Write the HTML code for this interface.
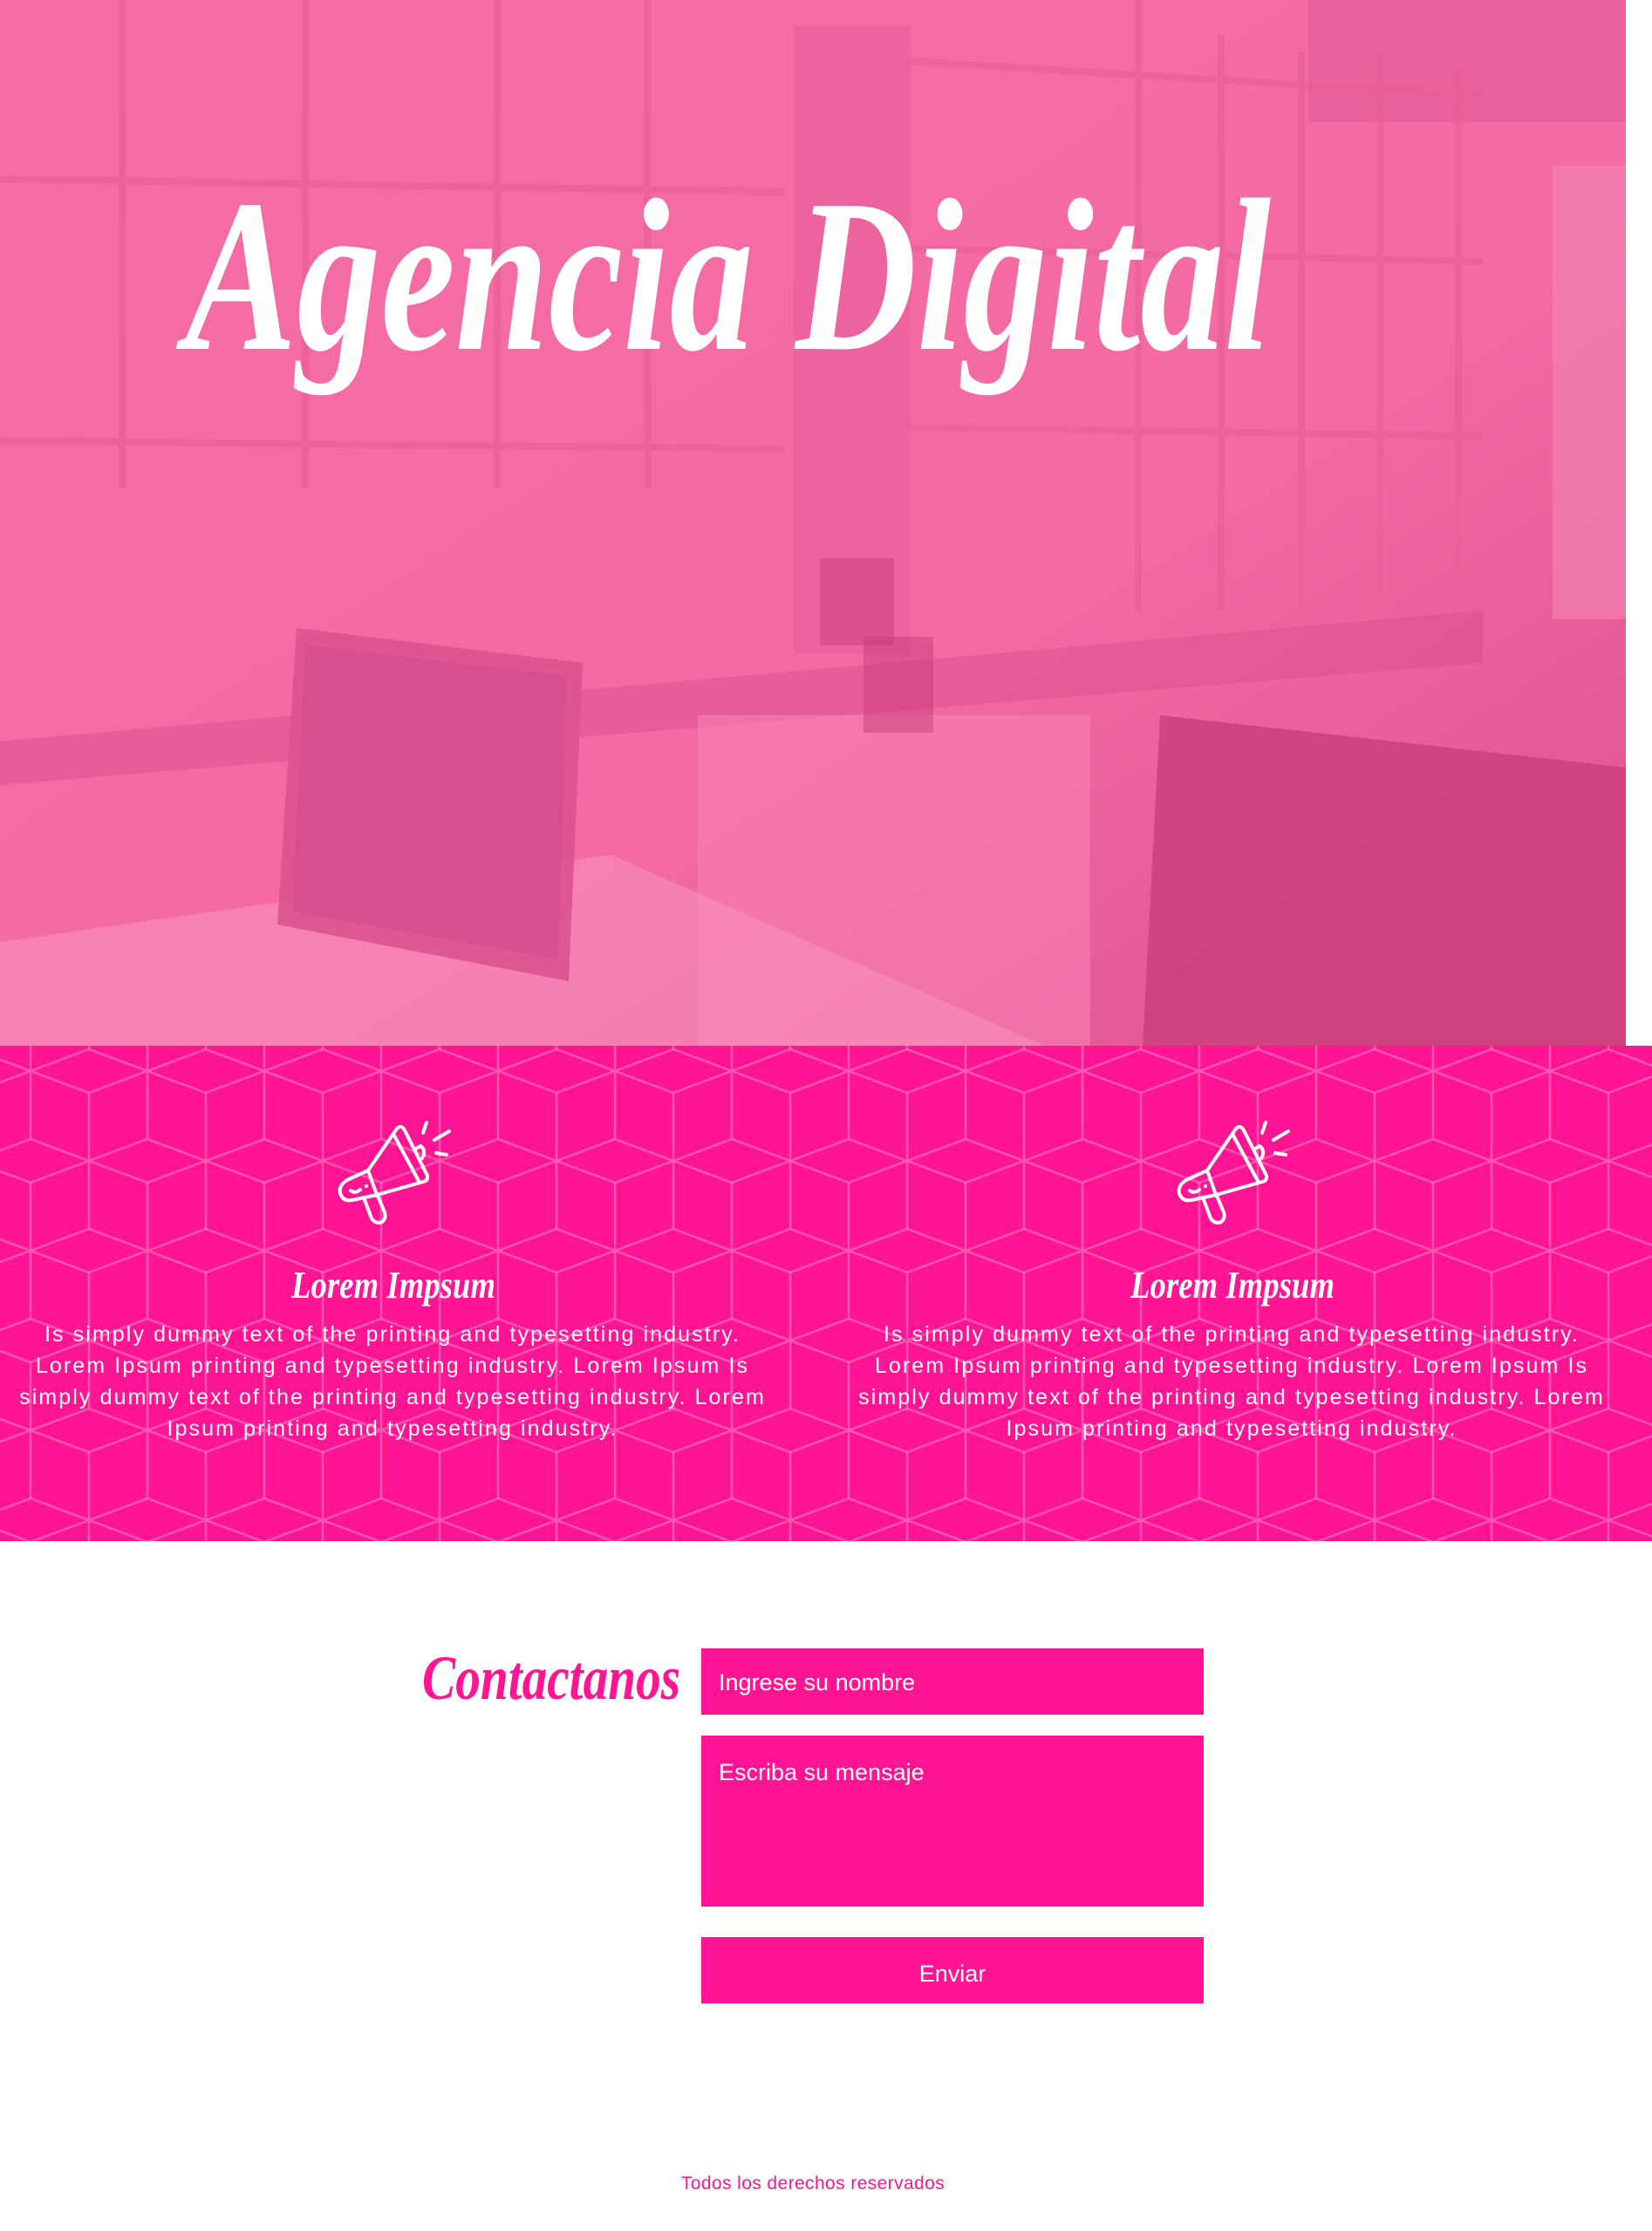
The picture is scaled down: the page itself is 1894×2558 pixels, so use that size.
<!DOCTYPE html>
<html><head><meta charset="utf-8">
<style>
*{margin:0;padding:0;box-sizing:border-box}
body{width:1894px;height:2558px;background:#fff;position:relative;overflow:hidden;font-family:"Liberation Sans",sans-serif}
.abs{position:absolute}
.feat{left:0;top:1199px;width:1894px;height:568px;background:#ff1493}
.p{position:absolute;width:960px;text-align:center;color:#fff;font-size:25px;letter-spacing:2.1px;line-height:36px;top:1512px}
.box{position:absolute;left:804px;width:576px;background:#ff1493;color:#fff;font-size:27px}
</style></head><body>

<svg class="abs" style="left:0;top:0" width="1864" height="1200" viewBox="0 0 1864 1200">
<defs>
<linearGradient id="g1" x1="0" y1="0" x2="1" y2="1">
<stop offset="0" stop-color="#f66ba4"/><stop offset="0.6" stop-color="#f46ba4"/><stop offset="1" stop-color="#dc4f8b"/>
</linearGradient>
</defs>
<rect width="1864" height="1200" fill="url(#g1)"/>
<rect x="1500" y="0" width="364" height="140" fill="#e05a92" opacity="0.5"/>
<g stroke="#e85d96" stroke-width="8" opacity="0.6" fill="none">
<line x1="140" y1="0" x2="140" y2="560"/><line x1="350" y1="0" x2="350" y2="560"/>
<line x1="570" y1="0" x2="570" y2="560"/><line x1="742" y1="0" x2="742" y2="560"/>
<line x1="1305" y1="0" x2="1305" y2="700"/><line x1="1400" y1="40" x2="1400" y2="700"/>
<line x1="1492" y1="60" x2="1492" y2="700"/><line x1="1582" y1="60" x2="1582" y2="680"/>
<line x1="1672" y1="80" x2="1672" y2="660"/>
<line x1="0" y1="205" x2="900" y2="220"/><line x1="0" y1="505" x2="900" y2="515"/>
<line x1="1040" y1="70" x2="1700" y2="110"/><line x1="1040" y1="285" x2="1700" y2="300"/>
<line x1="1040" y1="490" x2="1700" y2="500"/>
</g>
<rect x="910" y="30" width="134" height="720" fill="#e8609a" opacity="0.7"/>
<rect x="1780" y="190" width="84" height="520" fill="#f58cb8" opacity="0.5"/>
<polygon points="0,850 1700,700 1700,760 0,900" fill="#d4498a" opacity="0.4"/>
<polygon points="800,820 1250,820 1250,1200 800,1200" fill="#f788b8" opacity="0.5"/>
<polygon points="0,1080 700,980 1200,1200 0,1200" fill="#f690bd" opacity="0.6"/>
<polygon points="340,720 668,760 652,1125 318,1060" fill="#dc5390" opacity="0.9"/>
<polygon points="350,740 650,775 640,1100 335,1045" fill="#d14a87" opacity="0.5"/>
<polygon points="1330,820 1864,880 1864,1200 1310,1200" fill="#cc3f7b" opacity="0.85"/>
<rect x="940" y="640" width="85" height="100" fill="#c03873" opacity="0.4"/>
<rect x="990" y="730" width="80" height="110" fill="#c83d7a" opacity="0.5"/>
<text x="212" y="400" font-family="Liberation Serif,serif" font-style="italic" font-weight="bold" font-size="250" fill="#fff" textLength="1245" lengthAdjust="spacingAndGlyphs">Agencia Digital</text>
</svg>

<div class="abs feat">
<svg width="1894" height="568" style="position:absolute;left:0;top:0">
<defs>
<pattern id="cube" x="35" y="29" width="134" height="206" patternUnits="userSpaceOnUse">
<g stroke="rgba(255,255,255,0.28)" stroke-width="2.5" fill="none">
<path d="M0,-78 V78 M-67,-25 L67,25 M-67,25 L67,-25"/>
<path d="M134,-78 V78 M67,-25 L201,25 M67,25 L201,-25"/>
<path d="M0,128 V284 M-67,181 L67,231 M-67,231 L67,181"/>
<path d="M134,128 V284 M67,181 L201,231 M67,231 L201,181"/>
<path d="M67,25 V181 M0,78 L134,128 M0,128 L134,78"/>
</g>
</pattern>
</defs>
<rect width="1894" height="568" fill="url(#cube)"/>
</svg>
</div>

<svg class="abs" style="left:370px;top:1272px" width="160" height="150" viewBox="0 0 160 150">
<g stroke="#fff" stroke-width="4" fill="none" stroke-linecap="round" stroke-linejoin="round">
<path d="M52,70 L30,80 Q18,86 20,96 Q23,106 34,104 L62,98 Z"/>
<path d="M52,70 L85,22 Q90,17 94,24 L120,76 Q121,82 115,83 L62,98"/>
<path d="M82,30 L110,82"/>
<path d="M107,45 L112,42 Q117,45 116,52 L114,56"/>
<path d="M47,101 L56,125 Q61,132 68,129 Q73,125 71,118 L63,99"/>
<path d="M32,93 Q37,97 43,92"/>
<path d="M115,27 L119,15 M128,35 L145,25 M130,50 L142,52"/>
</g>
<circle cx="50" cy="88" r="2" fill="#fff"/><circle cx="62" cy="98" r="3" fill="#fff"/>
</svg>
<svg class="abs" style="left:1332px;top:1272px" width="160" height="150" viewBox="0 0 160 150">
<g stroke="#fff" stroke-width="4" fill="none" stroke-linecap="round" stroke-linejoin="round">
<path d="M52,70 L30,80 Q18,86 20,96 Q23,106 34,104 L62,98 Z"/>
<path d="M52,70 L85,22 Q90,17 94,24 L120,76 Q121,82 115,83 L62,98"/>
<path d="M82,30 L110,82"/>
<path d="M107,45 L112,42 Q117,45 116,52 L114,56"/>
<path d="M47,101 L56,125 Q61,132 68,129 Q73,125 71,118 L63,99"/>
<path d="M32,93 Q37,97 43,92"/>
<path d="M115,27 L119,15 M128,35 L145,25 M130,50 L142,52"/>
</g>
<circle cx="50" cy="88" r="2" fill="#fff"/><circle cx="62" cy="98" r="3" fill="#fff"/>
</svg>

<svg class="abs" style="left:0;top:1442px" width="1894" height="70">
<text x="334" y="46" font-family="Liberation Serif,serif" font-style="italic" font-weight="bold" font-size="44" fill="#fff" textLength="234" lengthAdjust="spacingAndGlyphs">Lorem Impsum</text>
<text x="1296" y="46" font-family="Liberation Serif,serif" font-style="italic" font-weight="bold" font-size="44" fill="#fff" textLength="234" lengthAdjust="spacingAndGlyphs">Lorem Impsum</text>
</svg>

<div class="p" style="left:-30px">Is simply dummy text of the printing and typesetting industry.<br>Lorem Ipsum printing and typesetting industry. Lorem Ipsum Is<br>simply dummy text of the printing and typesetting industry. Lorem<br>Ipsum printing and typesetting industry.</div>
<div class="p" style="left:932px">Is simply dummy text of the printing and typesetting industry.<br>Lorem Ipsum printing and typesetting industry. Lorem Ipsum Is<br>simply dummy text of the printing and typesetting industry. Lorem<br>Ipsum printing and typesetting industry.</div>

<svg class="abs" style="left:460px;top:1870px" width="340" height="100">
<text x="24" y="78" font-family="Liberation Serif,serif" font-style="italic" font-weight="bold" font-size="72" fill="#ff1493" textLength="296" lengthAdjust="spacingAndGlyphs">Contactanos</text>
</svg>

<div class="box" style="top:1890px;height:76px;line-height:78px;padding-left:20px">Ingrese su nombre</div>
<div class="box" style="top:1990px;height:196px;padding:24px 0 0 20px;line-height:36px">Escriba su mensaje</div>
<div class="box" style="top:2221px;height:76px;line-height:84px;text-align:center">Enviar</div>

<div class="abs" style="left:0;width:1864px;top:2492px;text-align:center;color:#ff1493;font-size:21px;letter-spacing:0.4px">Todos los derechos reservados</div>
</body></html>
